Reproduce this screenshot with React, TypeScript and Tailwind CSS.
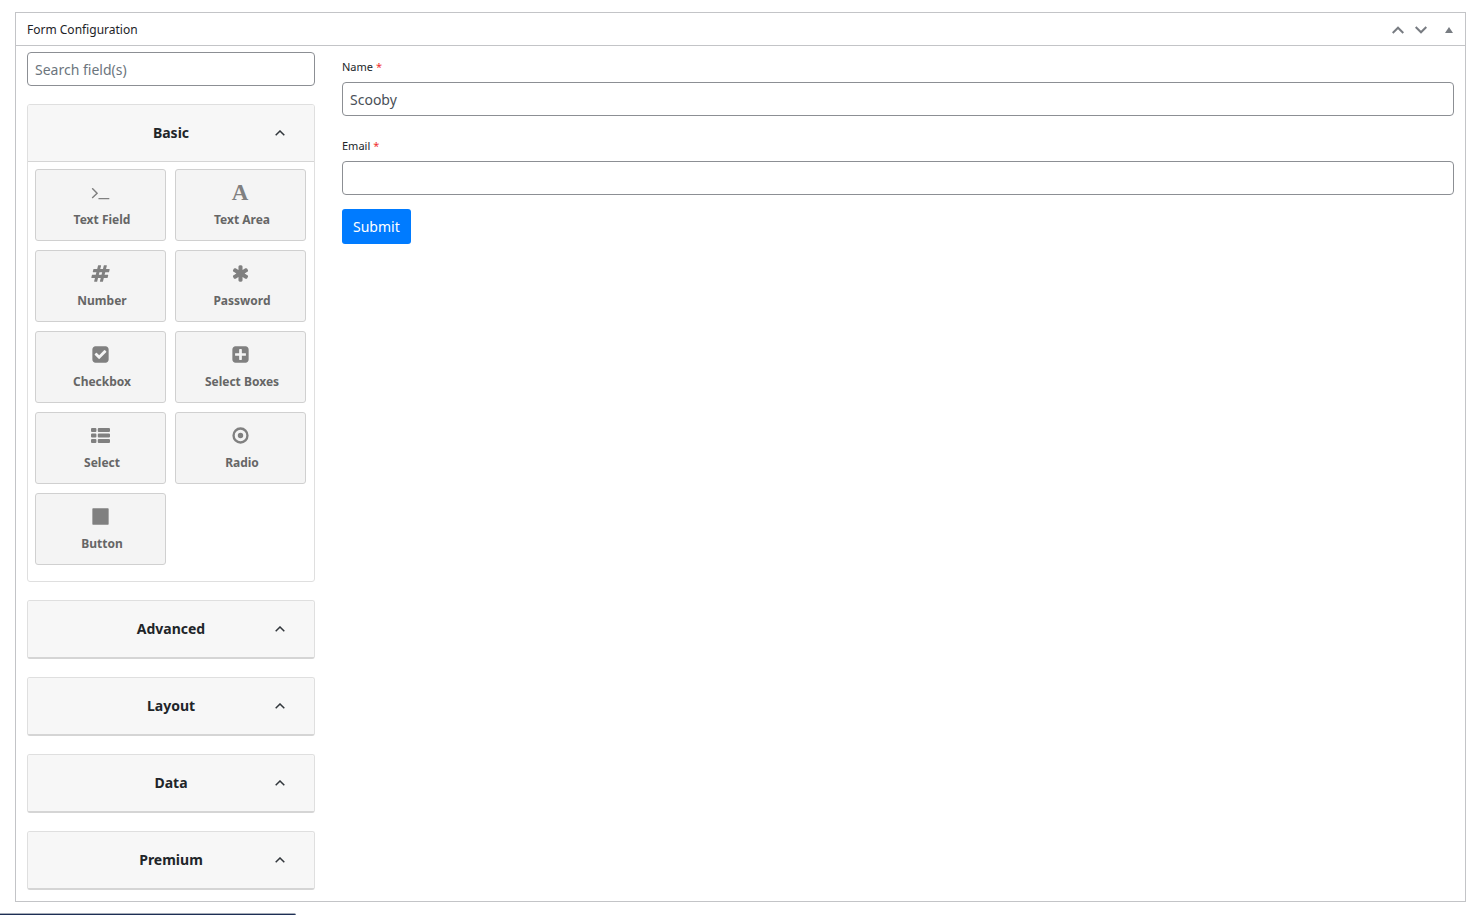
import React, { useState } from 'react';

type IconName = 'terminal' | 'font' | 'hashtag' | 'asterisk' | 'check' | 'plus' | 'list' | 'radio' | 'stop';

interface Field {
  label: string;
  icon: IconName;
}

const basicFields: Field[] = [
  { label: 'Text Field', icon: 'terminal' },
  { label: 'Text Area', icon: 'font' },
  { label: 'Number', icon: 'hashtag' },
  { label: 'Password', icon: 'asterisk' },
  { label: 'Checkbox', icon: 'check' },
  { label: 'Select Boxes', icon: 'plus' },
  { label: 'Select', icon: 'list' },
  { label: 'Radio', icon: 'radio' },
  { label: 'Button', icon: 'stop' },
];

const groups = ['Advanced', 'Layout', 'Data', 'Premium'];

const iconPaths: Record<Exclude<IconName, 'font'>, string> = {
  terminal:
    'M649 983l-466 466q-10 10-23 10t-23-10l-50-50q-10-10-10-23t10-23l393-393-393-393q-10-10-10-23t10-23l50-50q10-10 23-10t23 10l466 466q10 10 10 23t-10 23zm1079 457v64q0 14-9 23t-23 9h-960q-14 0-23-9t-9-23v-64q0-14 9-23t23-9h960q14 0 23 9t9 23z',
  hashtag:
    'M991 1024l64-256h-254l-64 256h254zm768-504l-56 224q-7 24-31 24h-327l-64 256h311q15 0 25 12 10 14 6 28l-56 224q-5 24-31 24h-327l-81 328q-7 24-31 24h-224q-16 0-26-12-9-12-6-28l78-312h-254l-81 328q-7 24-31 24h-225q-15 0-25-12-9-12-6-28l78-312h-311q-15 0-25-12-9-12-6-28l56-224q7-24 31-24h327l64-256h-311q-15 0-25-12-10-14-6-28l56-224q5-24 31-24h327l81-328q7-24 32-24h224q15 0 25 12 9 12 6 28l-78 312h254l81-328q7-24 32-24h224q15 0 25 12 9 12 6 28l-78 312h311q15 0 25 12 9 12 6 28z',
  asterisk:
    'M1546 1050q46 26 59.5 77.5t-12.5 97.5l-64 110q-26 46-77.5 59.5t-97.5-12.5l-266-153v307q0 52-38 90t-90 38h-128q-52 0-90-38t-38-90v-307l-266 153q-46 26-97.5 12.5t-77.5-59.5l-64-110q-26-46-12.5-97.5t59.5-77.5l266-154-266-154q-46-26-59.5-77.5t12.5-97.5l64-110q26-46 77.5-59.5t97.5 12.5l266 153v-307q0-52 38-90t90-38h128q52 0 90 38t38 90v307l266-153q46-26 97.5-12.5t77.5 59.5l64 110q26 46 12.5 97.5t-59.5 77.5l-266 154z',
  check:
    'M813 1299l614-614q19-19 19-45t-19-45l-102-102q-19-19-45-19t-45 19l-467 467-211-211q-19-19-45-19t-45 19l-102 102q-19 19-19 45t19 45l358 358q19 19 45 19t45-19zm851-883v960q0 119-84.5 203.5t-203.5 84.5h-960q-119 0-203.5-84.5t-84.5-203.5v-960q0-119 84.5-203.5t203.5-84.5h960q119 0 203.5 84.5t84.5 203.5z',
  plus:
    'M1408 960v-128q0-26-19-45t-45-19h-320v-320q0-26-19-45t-45-19h-128q-26 0-45 19t-19 45v320h-320q-26 0-45 19t-19 45v128q0 26 19 45t45 19h320v320q0 26 19 45t45 19h128q26 0 45-19t19-45v-320h320q26 0 45-19t19-45zm256-544v960q0 119-84.5 203.5t-203.5 84.5h-960q-119 0-203.5-84.5t-84.5-203.5v-960q0-119 84.5-203.5t203.5-84.5h960q119 0 203.5 84.5t84.5 203.5z',
  list:
    'M96 192h320q96 0 96 96v192q0 96-96 96h-320q-96 0-96-96v-192q0-96 96-96zm640 0h960q96 0 96 96v192q0 96-96 96h-960q-96 0-96-96v-192q0-96 96-96zM96 704h320q96 0 96 96v192q0 96-96 96h-320q-96 0-96-96v-192q0-96 96-96zm640 0h960q96 0 96 96v192q0 96-96 96h-960q-96 0-96-96v-192q0-96 96-96zM96 1216h320q96 0 96 96v192q0 96-96 96h-320q-96 0-96-96v-192q0-96 96-96zm640 0h960q96 0 96 96v192q0 96-96 96h-960q-96 0-96-96v-192q0-96 96-96z',
  radio:
    'M896 640a256 256 0 1 1 0 512a256 256 0 1 1 0-512zM896 352a544 544 0 1 0 0 1088a544 544 0 1 0 0-1088zM896 128a768 768 0 1 1 0 1536a768 768 0 1 1 0-1536z',
  stop: 'M1664 192v1408q0 26-19 45t-45 19h-1408q-26 0-45-19t-19-45v-1408q0-26 19-45t45-19h1408q26 0 45 19t19 45z',
};

const FieldIcon: React.FC<{ name: IconName }> = ({ name }) => {
  if (name === 'font') {
    return (
      <span aria-hidden="true" className="mr-px h-[19px] font-['Liberation_Serif',serif] text-[23px] leading-[19px] font-bold text-[#808080]">
        A
      </span>
    );
  }
  return (
    <svg viewBox="0 0 1792 1792" className="mr-px size-[19px] fill-[#808080]" fillRule="evenodd" aria-hidden="true">
      <path d={iconPaths[name]} />
    </svg>
  );
};

const Caret: React.FC = () => (
  <svg viewBox="0 0 10 6" className="h-[6px] w-[10px] flex-shrink-0" fill="none" stroke="#32373c" strokeWidth="1.5" aria-hidden="true">
    <path d="M.7 5.3 5 1l4.300 4.300" />
  </svg>
);

const GroupButton: React.FC<{ title: string; open: boolean; onClick?: () => void }> = ({ title, open, onClick }) => (
  <button
    type="button"
    aria-expanded={open}
    onClick={onClick}
    className="grid h-14 w-full grid-cols-[1fr_auto_1fr] items-center bg-[#f7f7f7] text-sm font-bold text-[#212529]"
  >
    <span className="col-start-2">{title}</span>
    <span className="flex justify-end pr-[29px]">
      <Caret />
    </span>
  </button>
);

interface TextInputProps {
  id: string;
  label: string;
  defaultValue?: string;
}

const TextInput: React.FC<TextInputProps> = ({ id, label, defaultValue }) => (
  <div className="flex flex-col">
    <label htmlFor={id} className="mb-[6px] text-[11px] leading-[18px] text-[#212529]">
      {label} <span className="text-[#f03030]">*</span>
    </label>
    <input
      id={id}
      type="text"
      required
      defaultValue={defaultValue}
      className="h-[34px] w-full rounded-[4px] border border-[#8c8f94] bg-white px-[7px] text-sm text-[#495057]"
    />
  </div>
);

const App: React.FC = () => {
  const [open, setOpen] = useState(true);

  return (
    <div className="flex min-h-screen flex-col justify-between overflow-hidden bg-white font-['Noto_Sans',sans-serif]">
      <section className="mx-[15px] mt-3 border border-[#c3c4c7]">
        {/* Panel header */}
        <header className="flex h-[33px] items-center justify-between border-b border-[#c3c4c7] pt-px pr-3 pl-[11px]">
          <h2 className="text-xs font-normal text-[#1d2327]">Form Configuration</h2>
          <div className="flex items-center">
            <button type="button" aria-label="Move up" className="mr-[11px]">
              <svg viewBox="0 0 12 8" className="h-2 w-3" fill="none" stroke="#787c82" strokeWidth="2">
                <path d="M.7 7 6 1.700 11.300 7" />
              </svg>
            </button>
            <button type="button" aria-label="Move down" className="mr-[18px]">
              <svg viewBox="0 0 12 8" className="h-2 w-3" fill="none" stroke="#787c82" strokeWidth="2">
                <path d="M.7 1 6 6.300 11.300 1" />
              </svg>
            </button>
            <button type="button" aria-label="Toggle panel">
              <svg viewBox="0 0 8 6" className="h-[6px] w-2" fill="#787c82">
                <path d="M4 0 8 6H0z" />
              </svg>
            </button>
          </div>
        </header>

        <div className="flex items-start gap-[27px] px-[11px] pt-[6px] pb-[11px]">
          {/* Field palette */}
          <aside className="flex w-72 flex-shrink-0 flex-col gap-[18px]">
            <input
              type="search"
              aria-label="Search field(s)"
              placeholder="Search field(s)"
              className="h-[34px] w-full rounded-[4px] border border-[#8c8f94] bg-white px-[7px] text-sm placeholder:text-[#6c757d]"
            />

            <div className="overflow-hidden rounded-[3px] border border-[#dfdfdf]">
              <GroupButton title="Basic" open={open} onClick={() => setOpen(!open)} />
              {open && (
                <div className="grid grid-cols-2 gap-[9px] border-t border-[#d5d5d5] pt-[7px] pr-2 pb-4 pl-[7px]">
                  {basicFields.map((field) => (
                    <button
                      key={field.label}
                      type="button"
                      className="flex h-[72px] flex-col items-center rounded-[3px] border border-[#d0d0d0] bg-[#f4f4f4] pt-[13px] text-xs font-bold text-[#666]"
                    >
                      <FieldIcon name={field.icon} />
                      <span className="mt-2 pl-[3px] leading-5">{field.label}</span>
                    </button>
                  ))}
                </div>
              )}
            </div>

            {groups.map((group) => (
              <div key={group} className="overflow-hidden rounded-[3px] border border-b-2 border-[#dfdfdf] border-b-[#d5d5d5]">
                <GroupButton title={group} open={false} />
              </div>
            ))}
          </aside>

          {/* Form preview */}
          <form className="flex min-w-0 flex-1 flex-col pt-[6px]" onSubmit={(e) => e.preventDefault()}>
            <div className="flex flex-col gap-[21px]">
              <TextInput id="name" label="Name" defaultValue="Scooby" />
              <TextInput id="email" label="Email" />
            </div>
            <button type="submit" className="mt-[14px] h-[35px] self-start rounded-[3px] bg-[#007bff] px-[11px] text-sm text-white">
              Submit
            </button>
          </form>
        </div>
      </section>

      <div className="h-[2px] w-[296px] rounded-tr-[2px] border-t border-[#a5acb8] bg-[#1d2f55]" />
    </div>
  );
};

export default App;
